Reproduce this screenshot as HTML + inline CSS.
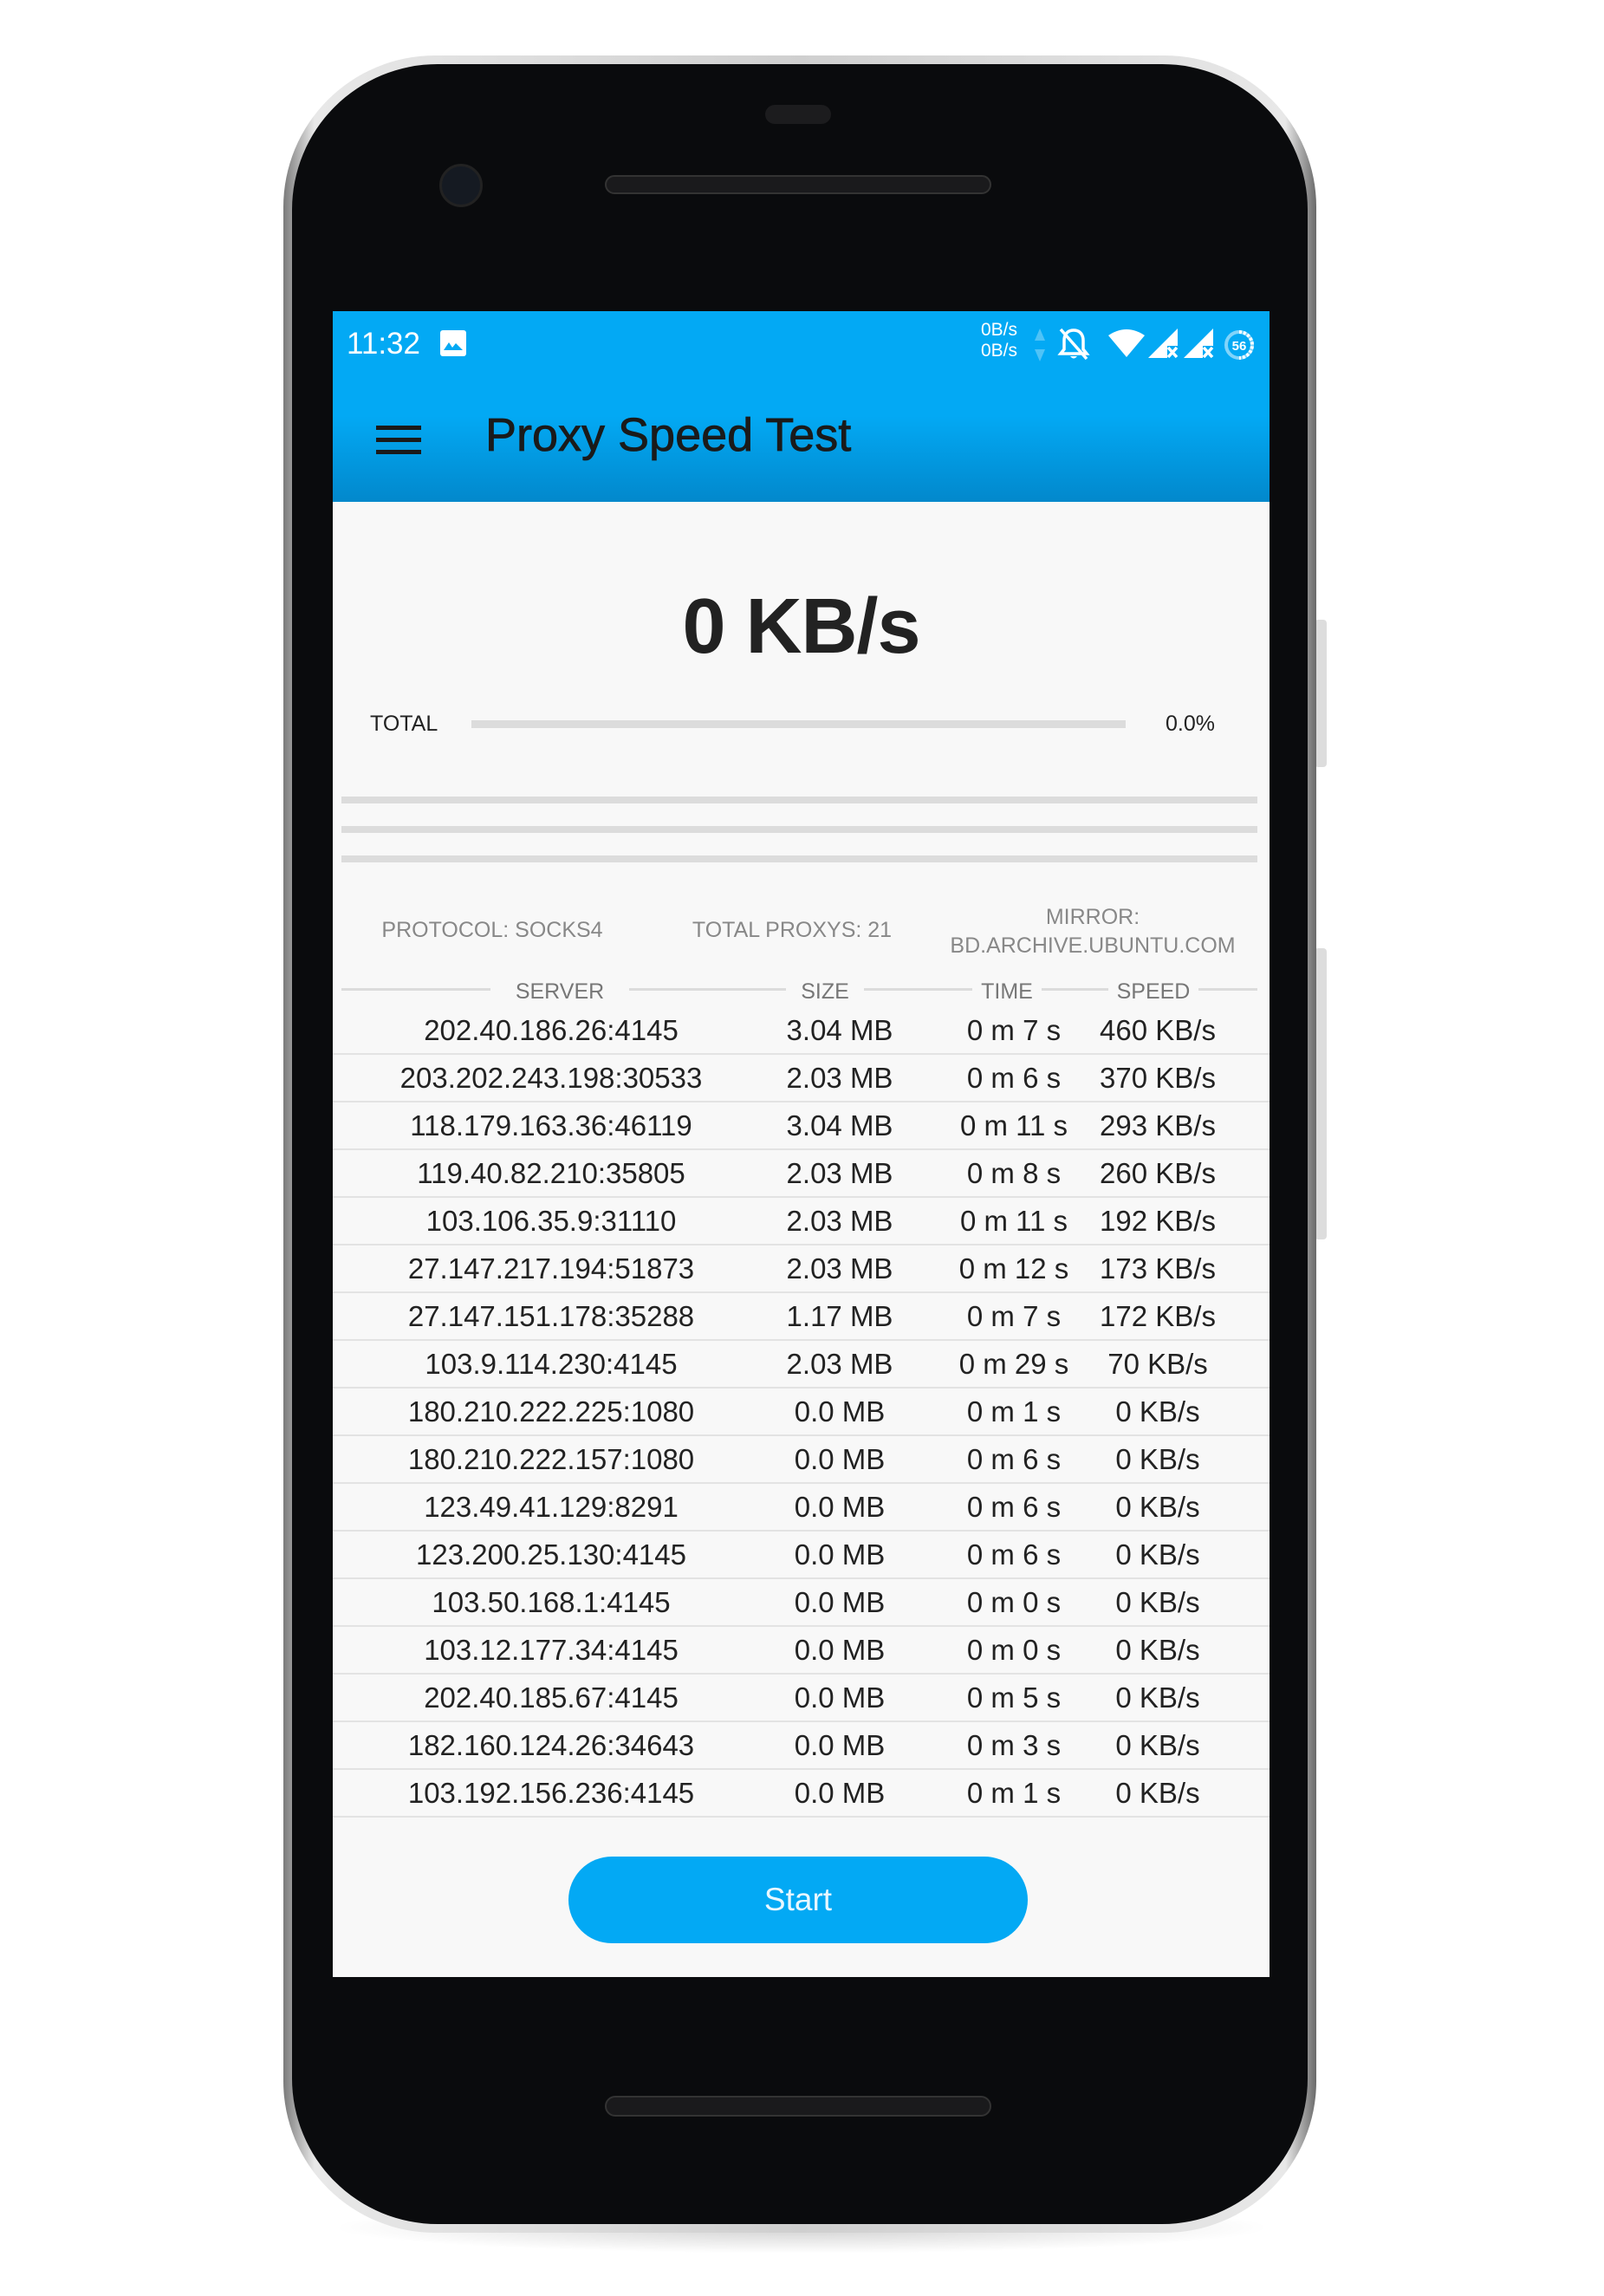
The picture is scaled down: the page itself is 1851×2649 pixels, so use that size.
<!DOCTYPE html>
<html><head><meta charset="utf-8"><style>
*{margin:0;padding:0;box-sizing:border-box}
body{width:1851px;height:2649px;background:#fff;position:relative;overflow:hidden;font-family:"Liberation Sans",sans-serif}
.a{position:absolute}
.shadow{left:380px;top:2540px;width:1090px;height:60px;border-radius:50%;background:radial-gradient(ellipse at center,rgba(0,0,0,.18),rgba(0,0,0,0) 70%)}
.outer{left:327px;top:64px;width:1192px;height:2512px;border-radius:175px;background:linear-gradient(90deg,#7a7a7a,#e8e8e8 3%,#cfcfcf 50%,#e8e8e8 97%,#6a6a6a)}
.inner{left:337px;top:74px;width:1172px;height:2492px;border-radius:168px;background:#0a0b0d}
.screen{left:384px;top:359px;width:1081px;height:1922px;background:#f8f8f8;overflow:hidden}
.sb{left:0;top:0;width:1081px;height:220px;background:linear-gradient(180deg,#03a9f4 0,#03a9f4 55%,#0288cc 100%)}
.card{left:0;top:220px;width:1081px;height:1702px;background:#f8f8f8;border-top-left-radius:22px}
.c{text-align:center;white-space:nowrap}
.row{left:0;width:1081px;height:55px;border-bottom:2px solid #e3e3e3;font-size:33px;color:#222}
.row span{position:absolute;top:8px;transform:translateX(-50%);white-space:nowrap}
.gl{height:8px;background:#dcdcdc;left:10px;width:1057px}
.hd{font-size:25px;color:#777;top:771px}
.side{background:#ddd;border-radius:4px}
</style></head><body>
<div class="a shadow"></div>
<div class="a side" style="left:1517px;top:715px;width:14px;height:170px"></div>
<div class="a side" style="left:1517px;top:1094px;width:14px;height:336px"></div>
<div class="a outer"></div>
<div class="a inner"></div>
<div class="a" style="left:883px;top:121px;width:76px;height:22px;border-radius:11px;background:#1c1c1e"></div>
<div class="a" style="left:698px;top:202px;width:446px;height:22px;border-radius:11px;background:#1a1a1c;border:2px solid #333"></div>
<div class="a" style="left:507px;top:189px;width:50px;height:50px;border-radius:50%;background:#151a22;border:3px solid #222"></div>
<div class="a" style="left:698px;top:2418px;width:446px;height:24px;border-radius:12px;background:#1a1a1c;border:2px solid #333"></div>

<div class="a screen">
 <div class="a sb"></div>
 <div class="a" style="left:16px;top:18px;font-size:35px;color:#fff">11:32</div>
 <svg class="a" style="left:123px;top:21px" width="32" height="32" viewBox="0 0 32 32"><rect x="1" y="1" width="30" height="30" rx="3" fill="#fff"/><path d="M5 24 L11 15 L15 21 L19 16 L27 24Z" fill="#03a9f4"/></svg>
 <div class="a" style="left:748px;top:10px;font-size:21px;line-height:24px;color:#fff">0B/s<br>0B/s</div>
 <svg class="a" style="left:808px;top:18px" width="16" height="42" viewBox="0 0 16 42"><path d="M8 2 L14 16 H2Z M8 40 L14 26 H2Z" fill="#4fc3f7"/></svg>
 <svg class="a" style="left:836px;top:18px" width="38" height="40" viewBox="0 0 38 40"><path d="M19 4 C11 4 8 10 8 16 V26 L4 31 H34 L30 26 V16 C30 10 27 4 19 4Z" fill="none" stroke="#fff" stroke-width="3.5"/><path d="M15 34 Q19 39 23 34" fill="#fff"/><line x1="4" y1="3" x2="34" y2="37" stroke="#fff" stroke-width="3.5"/></svg>
 <svg class="a" style="left:894px;top:20px" width="44" height="34" viewBox="0 0 44 34"><path d="M1 8 Q22 -6 43 8 L22 33Z" fill="#fff"/></svg>
 <svg class="a" style="left:941px;top:20px" width="36" height="36" viewBox="0 0 36 36"><path d="M34 0 V20 H22 V34 H0Z" fill="#fff"/><path d="M23 22 L33 33 M33 22 L23 33" stroke="#fff" stroke-width="3.5"/></svg>
 <svg class="a" style="left:982px;top:20px" width="36" height="36" viewBox="0 0 36 36"><path d="M34 0 V20 H22 V34 H0Z" fill="#fff"/><path d="M23 22 L33 33 M33 22 L23 33" stroke="#fff" stroke-width="3.5"/></svg>
 <svg class="a" style="left:1027px;top:20px" width="38" height="38" viewBox="0 0 38 38"><circle cx="19" cy="19" r="15" fill="none" stroke="#81d4fa" stroke-width="4"/><path d="M19 4 A15 15 0 0 1 19 34" fill="none" stroke="#fff" stroke-width="4" stroke-dasharray="3 2"/><text x="19" y="25" text-anchor="middle" font-size="15" font-weight="bold" fill="#fff" font-family="Liberation Sans">56</text></svg>
 <svg class="a" style="left:50px;top:132px" width="52" height="33" viewBox="0 0 52 33"><rect y="0" width="52" height="5" fill="#1a1a1a"/><rect y="14" width="52" height="5" fill="#1a1a1a"/><rect y="28" width="52" height="5" fill="#1a1a1a"/></svg>
 <div class="a" style="left:176px;top:112px;font-size:54px;color:#1a1a1a;-webkit-text-stroke:0.8px #1a1a1a">Proxy Speed Test</div>
 <div class="a card"></div>
 <div class="a c" style="left:0;width:1081px;top:313px;font-size:90px;font-weight:bold;color:#222;letter-spacing:-1px">0 KB/s</div>
 <div class="a" style="left:43px;top:462px;font-size:25px;color:#222">TOTAL</div>
 <div class="a" style="left:160px;top:472px;width:755px;height:9px;background:#dcdcdc"></div>
 <div class="a" style="left:961px;top:462px;font-size:25px;color:#222">0.0%</div>
 <div class="a gl" style="top:560px"></div>
 <div class="a gl" style="top:594px"></div>
 <div class="a gl" style="top:628px"></div>
 <div class="a c" style="top:700px;font-size:25px;color:#888;left:-16px;width:400px">PROTOCOL: SOCKS4</div>
 <div class="a c" style="left:380px;width:300px;top:700px;font-size:25px;color:#888">TOTAL PROXYS: 21</div>
 <div class="a c" style="left:689px;width:376px;top:683px;font-size:25px;line-height:33px;color:#888">MIRROR:<br>BD.ARCHIVE.UBUNTU.COM</div>
 <div class="a" style="left:10px;top:781px;width:1057px;height:3px;background:#dcdcdc"></div>
 <div class="a c hd" style="left:182px;width:160px;background:#f8f8f8">SERVER</div>
 <div class="a c hd" style="left:523px;width:90px;background:#f8f8f8">SIZE</div>
 <div class="a c hd" style="left:738px;width:80px;background:#f8f8f8">TIME</div>
 <div class="a c hd" style="left:895px;width:104px;background:#f8f8f8">SPEED</div>
 <div class="a" style="left:0;top:803px;width:1081px">
 <div class="a row" style="top:0px"><span style="left:252px">202.40.186.26:4145</span><span style="left:585px">3.04 MB</span><span style="left:786px">0 m 7 s</span><span style="left:952px">460 KB/s</span></div>
 <div class="a row" style="top:55px"><span style="left:252px">203.202.243.198:30533</span><span style="left:585px">2.03 MB</span><span style="left:786px">0 m 6 s</span><span style="left:952px">370 KB/s</span></div>
 <div class="a row" style="top:110px"><span style="left:252px">118.179.163.36:46119</span><span style="left:585px">3.04 MB</span><span style="left:786px">0 m 11 s</span><span style="left:952px">293 KB/s</span></div>
 <div class="a row" style="top:165px"><span style="left:252px">119.40.82.210:35805</span><span style="left:585px">2.03 MB</span><span style="left:786px">0 m 8 s</span><span style="left:952px">260 KB/s</span></div>
 <div class="a row" style="top:220px"><span style="left:252px">103.106.35.9:31110</span><span style="left:585px">2.03 MB</span><span style="left:786px">0 m 11 s</span><span style="left:952px">192 KB/s</span></div>
 <div class="a row" style="top:275px"><span style="left:252px">27.147.217.194:51873</span><span style="left:585px">2.03 MB</span><span style="left:786px">0 m 12 s</span><span style="left:952px">173 KB/s</span></div>
 <div class="a row" style="top:330px"><span style="left:252px">27.147.151.178:35288</span><span style="left:585px">1.17 MB</span><span style="left:786px">0 m 7 s</span><span style="left:952px">172 KB/s</span></div>
 <div class="a row" style="top:385px"><span style="left:252px">103.9.114.230:4145</span><span style="left:585px">2.03 MB</span><span style="left:786px">0 m 29 s</span><span style="left:952px">70 KB/s</span></div>
 <div class="a row" style="top:440px"><span style="left:252px">180.210.222.225:1080</span><span style="left:585px">0.0 MB</span><span style="left:786px">0 m 1 s</span><span style="left:952px">0 KB/s</span></div>
 <div class="a row" style="top:495px"><span style="left:252px">180.210.222.157:1080</span><span style="left:585px">0.0 MB</span><span style="left:786px">0 m 6 s</span><span style="left:952px">0 KB/s</span></div>
 <div class="a row" style="top:550px"><span style="left:252px">123.49.41.129:8291</span><span style="left:585px">0.0 MB</span><span style="left:786px">0 m 6 s</span><span style="left:952px">0 KB/s</span></div>
 <div class="a row" style="top:605px"><span style="left:252px">123.200.25.130:4145</span><span style="left:585px">0.0 MB</span><span style="left:786px">0 m 6 s</span><span style="left:952px">0 KB/s</span></div>
 <div class="a row" style="top:660px"><span style="left:252px">103.50.168.1:4145</span><span style="left:585px">0.0 MB</span><span style="left:786px">0 m 0 s</span><span style="left:952px">0 KB/s</span></div>
 <div class="a row" style="top:715px"><span style="left:252px">103.12.177.34:4145</span><span style="left:585px">0.0 MB</span><span style="left:786px">0 m 0 s</span><span style="left:952px">0 KB/s</span></div>
 <div class="a row" style="top:770px"><span style="left:252px">202.40.185.67:4145</span><span style="left:585px">0.0 MB</span><span style="left:786px">0 m 5 s</span><span style="left:952px">0 KB/s</span></div>
 <div class="a row" style="top:825px"><span style="left:252px">182.160.124.26:34643</span><span style="left:585px">0.0 MB</span><span style="left:786px">0 m 3 s</span><span style="left:952px">0 KB/s</span></div>
 <div class="a row" style="top:880px"><span style="left:252px">103.192.156.236:4145</span><span style="left:585px">0.0 MB</span><span style="left:786px">0 m 1 s</span><span style="left:952px">0 KB/s</span></div>
 </div>
 <div class="a c" style="left:272px;top:1783px;width:530px;height:100px;border-radius:50px;background:#03a9f4;color:#e8f7ff;font-size:37px;line-height:100px">Start</div>
</div>
</body></html>
